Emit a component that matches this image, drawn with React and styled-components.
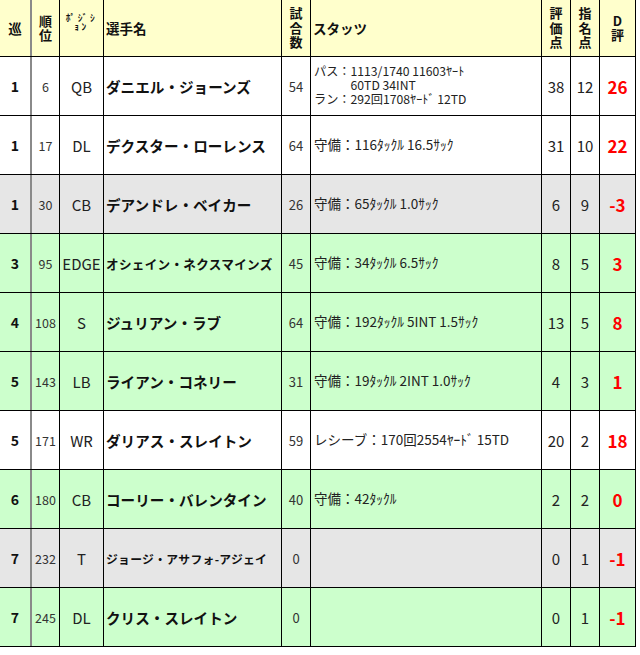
import React from "react";
import styled, { createGlobalStyle } from "styled-components";

const Global = createGlobalStyle`
  html, body { margin: 0; padding: 0; background: #fff; }
  body { font-family: "Noto Sans CJK JP", "Noto Sans", sans-serif; color: #111; }
`;

const COLS = "32px 28px 44px 178px 29px 231px 29px 29px 36px";

const Table = styled.div`
  width: 636px;
  display: flex;
  flex-direction: column;
`;

const Row = styled.div`
  display: grid;
  grid-template-columns: ${COLS};
  height: ${(p) => (p.$head ? 57 : 59)}px;
  box-sizing: border-box;
  border-bottom: 1px solid #000;
  background: ${(p) => p.$bg};
`;

const Cell = styled.div`
  box-sizing: border-box;
  border-right: ${(p) => (p.$first ? "2px solid #8a8a8a" : "1px solid #000")};
  display: flex;
  align-items: center;
  justify-content: ${(p) => (p.$left ? "flex-start" : "center")};
  padding-left: ${(p) => (p.$left ? 2 : 0)}px;
  overflow: hidden;
  white-space: nowrap;
`;

const HeadCell = styled(Cell)`
  font-weight: 700;
  font-size: 13.5px;
  line-height: 14.5px;
  text-align: center;
  white-space: normal;
`;

const Stack = styled.span`
  display: flex;
  flex-direction: column;
  align-items: center;
  font-size: 13px;
  line-height: 14.5px;
`;

const PosHead = styled(Cell)`
  font-size: 9.5px;
  line-height: 9px;
  font-weight: 700;
  letter-spacing: 2.6px;
  align-items: flex-start;
  padding-top: 13px;
  text-align: center;
  white-space: normal;
`;

const RoundCell = styled(Cell)`
  font-weight: 700;
  font-size: 14px;
`;

const RankCell = styled(Cell)`
  font-size: 12.5px;
  color: #333;
`;

const PosCell = styled(Cell)`
  font-size: 15px;
  color: #222;
`;

const NameCell = styled(Cell)`
  font-weight: 700;
  font-size: ${(p) => p.$size || 14.6}px;
  letter-spacing: ${(p) => (p.$size && p.$size < 13 ? "0.3px" : "0")};
`;

const GamesCell = styled(Cell)`
  font-size: 13px;
  color: #333;
`;

const StatsCell = styled(Cell)`
  font-size: ${(p) => (p.$multi ? 12.2 : 13.5)}px;
  line-height: 13.7px;
  padding-left: 3px;
  color: #222;
  white-space: pre;
  flex-direction: column;
  align-items: flex-start;
  justify-content: center;
`;

const Indent = styled.span`
  padding-left: 3em;
`;

const ScoreCell = styled(Cell)`
  font-size: 15px;
  color: #222;
`;

const DCell = styled(Cell)`
  font-weight: 700;
  font-size: 17px;
  color: #ff0000;
`;

const WHITE = "#ffffff";
const GRAY = "#e6e6e6";
const GREEN = "#ccffcc";

const rows = [
  { r: 1, rank: 6, pos: "QB", name: "ダニエル・ジョーンズ", g: 54, stats: "multi", s: 38, n: 12, d: 26, bg: WHITE },
  { r: 1, rank: 17, pos: "DL", name: "デクスター・ローレンス", g: 64, stats: "守備：116ﾀｯｸﾙ 16.5ｻｯｸ", s: 31, n: 10, d: 22, bg: WHITE },
  { r: 1, rank: 30, pos: "CB", name: "デアンドレ・ベイカー", g: 26, stats: "守備：65ﾀｯｸﾙ 1.0ｻｯｸ", s: 6, n: 9, d: -3, bg: GRAY },
  { r: 3, rank: 95, pos: "EDGE", name: "オシェイン・ネクスマインズ", size: 12.6, g: 45, stats: "守備：34ﾀｯｸﾙ 6.5ｻｯｸ", s: 8, n: 5, d: 3, bg: GREEN },
  { r: 4, rank: 108, pos: "S", name: "ジュリアン・ラブ", g: 64, stats: "守備：192ﾀｯｸﾙ 5INT 1.5ｻｯｸ", s: 13, n: 5, d: 8, bg: GREEN },
  { r: 5, rank: 143, pos: "LB", name: "ライアン・コネリー", g: 31, stats: "守備：19ﾀｯｸﾙ 2INT 1.0ｻｯｸ", s: 4, n: 3, d: 1, bg: GREEN },
  { r: 5, rank: 171, pos: "WR", name: "ダリアス・スレイトン", g: 59, stats: "レシーブ：170回2554ﾔｰﾄﾞ 15TD", s: 20, n: 2, d: 18, bg: WHITE },
  { r: 6, rank: 180, pos: "CB", name: "コーリー・バレンタイン", g: 40, stats: "守備：42ﾀｯｸﾙ", s: 2, n: 2, d: 0, bg: GREEN },
  { r: 7, rank: 232, pos: "T", name: "ジョージ・アサフォ-アジェイ", size: 11.8, g: 0, stats: "", s: 0, n: 1, d: -1, bg: GRAY },
  { r: 7, rank: 245, pos: "DL", name: "クリス・スレイトン", g: 0, stats: "", s: 0, n: 1, d: -1, bg: GREEN },
];

const Stacked = ({ text }) => (
  <Stack>
    {text.split("").map((c, i) => (
      <span key={i}>{c}</span>
    ))}
  </Stack>
);

export default function App() {
  return (
    <>
      <Global />
      <Table>
        <Row $head $bg="#ffffcc">
          <HeadCell $first>巡</HeadCell>
          <HeadCell><Stacked text="順位" /></HeadCell>
          <PosHead>ﾎﾟｼﾞｼ<br />ｮﾝ</PosHead>
          <HeadCell $left>選手名</HeadCell>
          <HeadCell><Stacked text="試合数" /></HeadCell>
          <HeadCell $left>スタッツ</HeadCell>
          <HeadCell><Stacked text="評価点" /></HeadCell>
          <HeadCell><Stacked text="指名点" /></HeadCell>
          <HeadCell><Stacked text="D評" /></HeadCell>
        </Row>
        {rows.map((row, i) => (
          <Row key={i} $bg={row.bg}>
            <RoundCell $first>{row.r}</RoundCell>
            <RankCell>{row.rank}</RankCell>
            <PosCell>{row.pos}</PosCell>
            <NameCell $left $size={row.size}>{row.name}</NameCell>
            <GamesCell>{row.g}</GamesCell>
            {row.stats === "multi" ? (
              <StatsCell $left $multi>
                <span>パス：1113/1740 11603ﾔｰﾄ</span>
                <Indent>60TD 34INT</Indent>
                <span>ラン：292回1708ﾔｰﾄﾞ 12TD</span>
              </StatsCell>
            ) : (
              <StatsCell $left>{row.stats}</StatsCell>
            )}
            <ScoreCell>{row.s}</ScoreCell>
            <ScoreCell>{row.n}</ScoreCell>
            <DCell>{row.d}</DCell>
          </Row>
        ))}
      </Table>
    </>
  );
}
